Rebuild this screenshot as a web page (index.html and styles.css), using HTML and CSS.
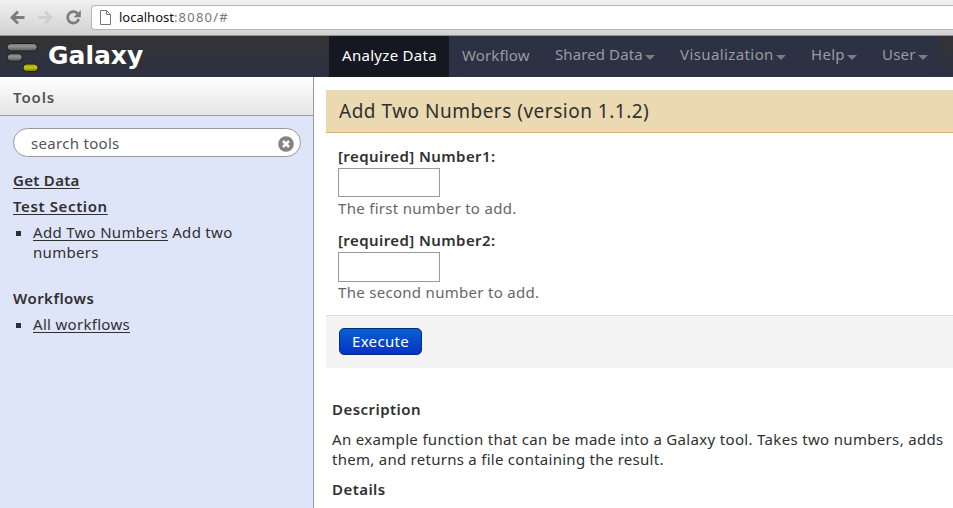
FILE: index.html
```html
<!DOCTYPE html>
<html lang="en">
<head>
<meta charset="utf-8">
<title>Galaxy</title>
<link rel="stylesheet" href="styles.css">
</head>
<body>
<div class="browser">
  <svg class="browser-icons" width="91" height="35" viewBox="0 0 91 35" fill="none">
    <path d="M24.500 17.500H12M18 11.500l-6 6 6 6" stroke="#7c7c7c" stroke-width="2.800"/>
    <path d="M38.500 17.500H51M45 11.500l6 6-6 6" stroke="#cfcfcf" stroke-width="2.800"/>
    <path d="M77.500 13.500a5.700 5.700 0 1 0 1.300 5.500" stroke="#7c7c7c" stroke-width="2.700"/>
    <path d="M80.800 10v7.200h-7.200z" fill="#7c7c7c"/>
  </svg>
  <div class="address">
    <svg width="11" height="15" viewBox="0 0 11 15" fill="none" stroke="#777" stroke-width="1"><path d="M.5.5h6l4 4v10H.5zM6.500.500v4h4"/></svg>
    <span class="url"><b>localhost</b>:8080/#</span>
  </div>
</div>
<header class="masthead">
  <div class="brand">
    <svg width="40" height="41" viewBox="0 0 40 41">
      <defs>
        <linearGradient id="gray" x2="0" y2="1"><stop stop-color="#777"/><stop offset=".4" stop-color="#929292"/><stop offset="1" stop-color="#555"/></linearGradient>
        <linearGradient id="gold" x2="0" y2="1"><stop stop-color="#969600"/><stop offset=".45" stop-color="#c8c809"/><stop offset="1" stop-color="#777700"/></linearGradient>
      </defs>
      <g stroke="#1d1e20" stroke-width="1">
        <rect x="7.200" y="7.500" width="30" height="7.500" rx="3.700" fill="url(#gray)"/>
        <rect x="7.200" y="17.700" width="15" height="7.500" rx="3.700" fill="url(#gray)"/>
        <rect x="23" y="28" width="15" height="7.500" rx="3.700" fill="url(#gold)"/>
      </g>
    </svg>
    <span class="brand-name">Galaxy</span>
  </div>
  <nav class="nav">
    <a class="tab analyze active"><span>Analyze Data</span></a>
    <a class="tab workflow"><span>Workflow</span></a>
    <a class="tab shared menu"><span>Shared Data</span></a>
    <a class="tab visual menu"><span>Visualization</span></a>
    <a class="tab help menu"><span>Help</span></a>
    <a class="tab user menu"><span>User</span></a>
  </nav>
</header>
<div class="page">
  <aside class="sidebar">
    <div class="panel-head">Tools</div>
    <div class="panel-body">
      <div class="search"><span>search tools</span>
        <svg width="16" height="16" viewBox="0 0 16 16"><circle cx="8" cy="8" r="7.800" fill="#838383"/><path d="M5 5l6 6M11 5l-6 6" stroke="#fff" stroke-width="2.500"/></svg>
      </div>
      <div class="section"><a class="get">Get Data</a></div>
      <div class="section"><a class="test">Test Section</a></div>
      <div class="tool"><i></i><p><a>Add Two Numbers</a> Add two<br>numbers</p></div>
      <div class="section workflows">Workflows</div>
      <div class="tool"><i></i><p><a>All workflows</a></p></div>
    </div>
  </aside>
  <main class="content">
    <form class="form">
      <h1>Add Two Numbers (version 1.1.2)</h1>
      <div class="field"><label for="n1">[required] Number1:</label><input id="n1" type="text"><p>The first number to add.</p></div>
      <div class="field second"><label for="n2">[required] Number2:</label><input id="n2" type="text"><p>The second number to add.</p></div>
      <div class="actions"><button type="button">Execute</button></div>
    </form>
    <section class="docs">
      <h2 class="desc">Description</h2>
      <p>An example function that can be made into a Galaxy tool. Takes two numbers, adds<br><span class="tail">them, and returns a file containing the result.</span></p>
      <h2>Details</h2>
    </section>
  </main>
</div>
</body>
</html>
```
FILE: styles.css
```css
* { box-sizing: border-box; }
body { margin: 0; height: 508px; overflow: hidden; background: #fff; color: #303030; font: 15px/20px "Noto Sans", sans-serif; letter-spacing: .3px; display: flex; flex-direction: column; }
p, h1, h2 { margin: 0; }
.browser { height: 36px; flex: none; display: flex; align-items: flex-start; background: linear-gradient(#f0f0f0, #d2d2d2); border-bottom: 1px solid #929292; }
.address { height: 25px; margin-top: 5px; flex: 1; display: flex; align-items: center; gap: 8px; padding-left: 8px; background: #fff; border: 1px solid #b5b5b5; border-right: 0; border-radius: 4px 0 0 4px; }
.url { margin-top: -1px; font-size: 13px; color: #777; letter-spacing: 1.2px; }
.url b { font-weight: 400; color: #111; letter-spacing: 0; }
.masthead { height: 41px; flex: none; display: flex; background: linear-gradient(#333, #2c3143); }
.brand { width: 329px; display: flex; }
.brand-name { margin-left: 8px; color: #fff; font: bold 25px/39px "DejaVu Sans", sans-serif; letter-spacing: 0; }
.nav { display: flex; background: #2c3143; }
.tab { display: flex; align-items: center; padding: 0 0 3px 13px; color: #999ba1; }
.active { background: #161821; color: #fff; }
.analyze { width: 120px; }
.workflow { width: 93px; letter-spacing: .15px; }
.shared { width: 125px; letter-spacing: .1px; }
.visual { width: 131px; letter-spacing: .4px; }
.help { width: 71px; letter-spacing: .3px; }
.user { width: 70px; letter-spacing: .2px; }
.menu { padding-bottom: 5px; }
.menu::after { content: ""; margin: 6px 0 0 2.5px; border: 5px solid transparent; border-top-color: #777c87; border-bottom: 0; }
.page { flex: 1; min-height: 0; display: flex; }
.sidebar { width: 314px; flex: none; display: flex; flex-direction: column; background: #dfe5f9; border-right: 1px solid #999; }
.panel-head { height: 39px; padding: 0 13px; line-height: 40px; font-weight: 600; letter-spacing: .9px; color: #555; background: linear-gradient(#fff, #e5e5e5); border-bottom: 1px solid #999; }
.panel-body { padding: 12px 12px 0 13px; }
.search { height: 29px; display: flex; align-items: center; justify-content: space-between; padding: 2px 6px 0 17px; border: 1px solid #999; border-radius: 15px; background: #fff; color: #555; }
.search span { margin-top: -2px; }
.section { height: 26px; line-height: 26px; font-weight: 600; }
.test { letter-spacing: .62px; }
.search + .section { margin-top: 10px; }
.section a, .tool a { text-decoration: underline; text-underline-offset: 2px; text-decoration-thickness: 1px; }
.tool { display: flex; padding-top: 3px; }
.tool i { width: 5px; height: 5px; margin: 9px 12px 0 3px; background: #303030; }
.workflows { margin-top: 23px; letter-spacing: .45px; }
.content { flex: 1; padding: 13px 0 0 12px; }
.form { display: block; }
.form h1 { height: 43px; padding-left: 13px; background: #ead9b1; border-bottom: 1px solid #d2b576; font-size: 19px; line-height: 42px; font-weight: 400; letter-spacing: .5px; white-space: nowrap; }
.field { height: 84px; padding: 14px 12px 0; }
.field label { display: block; height: 21px; line-height: 18px; font-weight: 600; letter-spacing: .42px; }
.field input { display: block; width: 102px; height: 29px; padding: 4px; border: 1px solid #999; background: #fff; font: inherit; }
.field p { color: #666; line-height: 22px; height: 24px; }
.second { height: 98px; }
.second input { height: 30px; }
.field.second p { line-height: 20px; }
.actions { height: 53px; padding: 12px 13px; background: #f4f4f4; border-top: 1px solid #dbdbdb; }
button { display: block; width: 83px; height: 27px; padding: 0; border: 1px solid #052f78; border-radius: 5px; background: linear-gradient(#0760cf, #0534c8); color: #fff; font: inherit; line-height: 23px; letter-spacing: .3px; }
.docs { padding: 31px 0 0 6px; white-space: nowrap; }
.docs h2 { font-size: 15px; line-height: 20px; font-weight: 600; letter-spacing: .45px; }
.docs p { margin: 10px 0; letter-spacing: .33px; }
.docs .tail { letter-spacing: .27px; }
```
